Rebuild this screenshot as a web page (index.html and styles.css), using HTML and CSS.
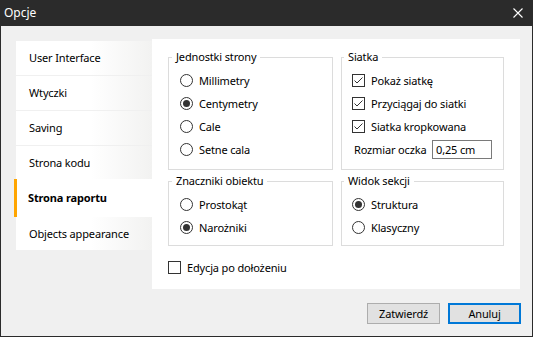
FILE: index.html
```html
<!DOCTYPE html>
<html lang="pl">
<head>
<meta charset="utf-8">
<title>Opcje</title>
<link rel="stylesheet" href="styles.css">
</head>
<body>
<div class="window">
  <div class="titlebar">
    <span class="title">Opcje</span>
    <svg class="close" width="10" height="10" viewBox="0 0 10 10"><path d="M0.5 0.5L9.5 9.5M9.5 0.5L0.5 9.5" stroke="#fff" stroke-width="1.1" fill="none"/></svg>
  </div>
  <div class="client">
    <div class="main">
      <nav class="sidebar">
        <div class="item">User Interface</div>
        <div class="item">Wtyczki</div>
        <div class="item">Saving</div>
        <div class="item short">Strona kodu</div>
        <div class="item selected">Strona raportu</div>
        <div class="item short">Objects appearance</div>
      </nav>
      <div class="panel">
        <div class="groups">
          <fieldset class="group top">
            <legend>Jednostki strony</legend>
            <label class="opt"><span class="radio"></span>Millimetry</label>
            <label class="opt"><span class="radio checked"></span>Centymetry</label>
            <label class="opt"><span class="radio"></span>Cale</label>
            <label class="opt"><span class="radio"></span>Setne cala</label>
          </fieldset>
          <fieldset class="group top right">
            <legend>Siatka</legend>
            <label class="opt"><svg class="check" width="13" height="13" viewBox="0 0 13 13"><rect x="0.5" y="0.5" width="12" height="12" fill="#fff" stroke="#333"/><path d="M2.5 6.5L5 9L10.5 3.5" stroke="#333" fill="none"/></svg>Pokaż siatkę</label>
            <label class="opt"><svg class="check" width="13" height="13" viewBox="0 0 13 13"><rect x="0.5" y="0.5" width="12" height="12" fill="#fff" stroke="#333"/><path d="M2.5 6.5L5 9L10.5 3.5" stroke="#333" fill="none"/></svg>Przyciągaj do siatki</label>
            <label class="opt"><svg class="check" width="13" height="13" viewBox="0 0 13 13"><rect x="0.5" y="0.5" width="12" height="12" fill="#fff" stroke="#333"/><path d="M2.5 6.5L5 9L10.5 3.5" stroke="#333" fill="none"/></svg>Siatka kropkowana</label>
            <div class="opt field"><span class="field-label">Rozmiar oczka</span><span class="input">0,25 cm</span></div>
          </fieldset>
          <fieldset class="group bottom">
            <legend>Znaczniki obiektu</legend>
            <label class="opt"><span class="radio"></span>Prostokąt</label>
            <label class="opt"><span class="radio checked"></span>Narożniki</label>
          </fieldset>
          <fieldset class="group bottom right">
            <legend>Widok sekcji</legend>
            <label class="opt"><span class="radio checked"></span>Struktura</label>
            <label class="opt"><span class="radio"></span>Klasyczny</label>
          </fieldset>
        </div>
        <label class="opt standalone"><svg class="check" width="13" height="13" viewBox="0 0 13 13"><rect x="0.5" y="0.5" width="12" height="12" fill="#fff" stroke="#333"/></svg>Edycja po dołożeniu</label>
      </div>
    </div>
    <div class="buttons">
      <button class="btn">Zatwierdź</button>
      <button class="btn default">Anuluj</button>
    </div>
  </div>
</div>
</body>
</html>
```
FILE: styles.css
```css
html, body {
  margin: 0;
  padding: 0;
  background: #2b2b2b;
}
.window {
  width: 533px;
  height: 337px;
  box-sizing: border-box;
  border: 1px solid #2b2b2b;
  border-top: 0;
  background: #f0f0f0;
  display: flex;
  flex-direction: column;
  font-family: "Noto Sans", "Open Sans", sans-serif;
  font-size: 11px;
  letter-spacing: -0.15px;
  color: #000;
}
.titlebar {
  height: 26px;
  flex: none;
  background: #2b2b2b;
  color: #fff;
  display: flex;
  align-items: center;
  justify-content: space-between;
  padding: 0 9px 0 3px;
}
.title {
  font-size: 12px;
  letter-spacing: 0;
  line-height: 16px;
}
.close {
  display: block;
  margin-top: -1px;
}
.client {
  flex: 1;
  display: flex;
  flex-direction: column;
  padding: 13px 11px 12px 15px;
}
.main {
  display: flex;
  height: 250px;
  flex: none;
}
.sidebar {
  width: 136px;
  flex: none;
  margin-top: 2px;
  display: flex;
  flex-direction: column;
}
.item {
  height: 34px;
  margin-bottom: 1px;
  display: flex;
  align-items: center;
  padding-left: 13px;
  background: linear-gradient(to right, #ffffff 55%, #f2f2f1);
  line-height: 16px;
}
.item.short {
  height: 33px;
}
.item.selected {
  height: 38px;
  margin: -1px 0 0 -2px;
  border-left: 3px solid #ffa500;
  padding-left: 11px;
  background: #fff;
  font-weight: bold;
}
.panel {
  width: 368px;
  box-sizing: border-box;
  background: #fff;
  padding: 10px 16px 0;
}
.groups {
  display: grid;
  grid-template-columns: 165px 163px;
  column-gap: 8px;
  row-gap: 3px;
}
.group {
  margin: 0;
  min-width: 0;
  border: 1px solid #dcdcdc;
  padding: 4px 6px 6px 11px;
}
.group.top {
  padding-bottom: 8px;
}
.group.right {
  padding-left: 10px;
}
.group legend {
  margin-left: -8px;
  padding: 0 4px;
  line-height: 16px;
}
.opt {
  height: 23px;
  display: flex;
  align-items: center;
  line-height: 16px;
  white-space: nowrap;
}
.radio {
  width: 13px;
  height: 13px;
  box-sizing: border-box;
  border: 1px solid #333;
  border-radius: 50%;
  background: #fff;
  margin-right: 6px;
  display: flex;
  align-items: center;
  justify-content: center;
  flex: none;
}
.radio.checked::after {
  content: "";
  width: 7px;
  height: 7px;
  border-radius: 50%;
  background: #333;
}
.check {
  display: block;
  flex: none;
  margin-right: 6px;
}
.field-label {
  width: 78px;
  margin-left: 2px;
}
.input {
  width: 60px;
  height: 19px;
  box-sizing: border-box;
  border: 1px solid #7a7a7a;
  padding-left: 3px;
  line-height: 17px;
  background: #fff;
}
.standalone {
  margin-top: 10px;
}
.buttons {
  margin-top: 14px;
  display: flex;
  justify-content: flex-end;
  gap: 8px;
}
.btn {
  width: 73px;
  height: 21px;
  box-sizing: border-box;
  border: 1px solid #adadad;
  background: #e1e1e1;
  font-family: "Noto Sans", "Open Sans", sans-serif;
  font-size: 11px;
  letter-spacing: -0.15px;
  color: #000;
  padding: 0;
  line-height: 16px;
}
.btn.default {
  border: 2px solid #0078d7;
}
```
